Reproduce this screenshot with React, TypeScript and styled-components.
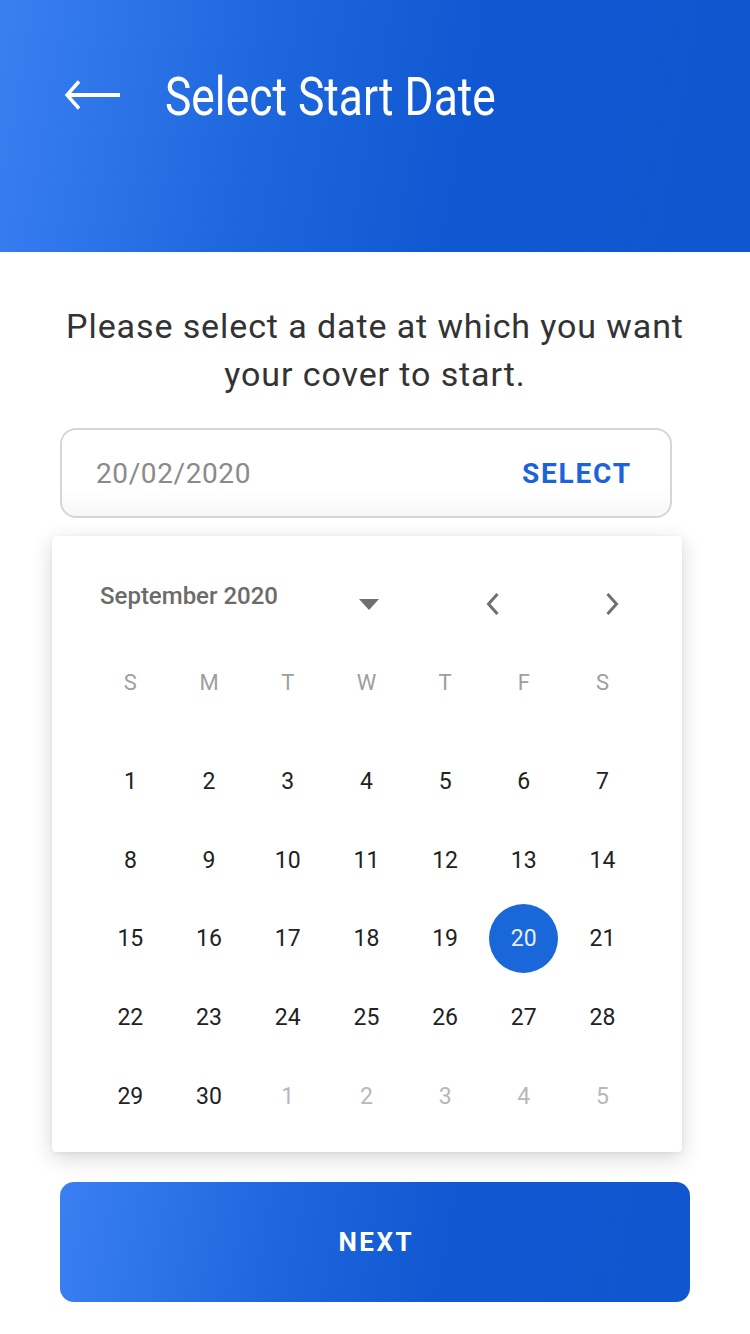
import React from 'react';
import styled, {createGlobalStyle} from 'styled-components';

type DayCell = {
	label: number,
	muted?: boolean,
	selected?: boolean
}

const GlobalStyle = createGlobalStyle`
	html, body {
		margin: 0;
		padding: 0;
		background: #ffffff;
	}
	body {
		font-family: Roboto, "Noto Sans", "Liberation Sans", sans-serif;
		-webkit-font-smoothing: antialiased;
	}
	* {
		box-sizing: border-box;
	}
`

const Page = styled.div`
	width: 750px;
	min-height: 1334px;
	display: flex;
	flex-direction: column;
	background: #ffffff;
`

const Header = styled.header`
	height: 252px;
	padding: 60px 0 0 64px;
	background: linear-gradient(100deg, #3a80f3 0%, #1e66dc 35%, #1058d1 62%, #0f56cf 100%);
`

const HeaderRow = styled.div`
	height: 72px;
	display: flex;
	align-items: center;
	gap: 45px;
`

const BackButton = styled.button`
	width: 56px;
	height: 34px;
	padding: 0;
	border: none;
	background: transparent;
	display: flex;
	align-items: center;
	cursor: pointer;
`

const Title = styled.h1`
	margin: 2px 0 0;
	font-size: 53px;
	line-height: 72px;
	font-weight: 400;
	color: #ffffff;
	white-space: nowrap;
	transform: scaleX(0.837);
	transform-origin: left center;
`

const Content = styled.main`
	display: flex;
	flex-direction: column;
	align-items: stretch;
	padding: 50px 60px 0;
`

const Intro = styled.p`
	margin: 0;
	font-size: 34px;
	line-height: 48px;
	color: #333333;
	text-align: center;
	letter-spacing: 0.9px;
	white-space: nowrap;
`

const DateField = styled.div`
	margin-top: 30px;
	width: 612px;
	height: 90px;
	padding: 0 38px 0 34px;
	display: flex;
	align-items: center;
	justify-content: space-between;
	border: 2px solid #d6d6d6;
	border-radius: 16px;
	background: linear-gradient(180deg, #ffffff 70%, #f7f7f7 100%);
`

const DateValue = styled.span`
	font-size: 28px;
	letter-spacing: 0.6px;
	color: #8a8a8a;
`

const SelectLink = styled.span`
	font-size: 28px;
	font-weight: 700;
	letter-spacing: 1.8px;
	color: #1a63d9;
`

const Calendar = styled.section`
	margin: 18px 0 0 -8px;
	width: 630px;
	height: 616px;
	padding: 0 40px 0 39px;
	background: #ffffff;
	border-radius: 4px;
	box-shadow: 0 6px 22px rgba(0, 0, 0, 0.16), 0 1px 4px rgba(0, 0, 0, 0.06);
`

const MonthBar = styled.div`
	height: 128px;
	padding: 40px 0 0 9px;
	display: flex;
	align-items: flex-start;
`

const MonthLabel = styled.span`
	width: 242px;
	font-size: 24px;
	font-weight: 500;
	color: #6b6b6b;
	line-height: 40px;
`

const IconSlot = styled.span<{gapBefore?: number}>`
	width: 62px;
	height: 56px;
	margin-left: ${props => props.gapBefore ?? 0}px;
	display: flex;
	align-items: center;
	justify-content: center;
`

const Grid = styled.div`
	display: grid;
	grid-template-columns: repeat(7, 78.7px);
`

const WeekDay = styled.div`
	height: 36px;
	display: flex;
	align-items: center;
	justify-content: center;
	font-size: 22px;
	color: #9e9e9e;
	margin-bottom: 42px;
`

const Day = styled.div<{muted?: boolean, selected?: boolean}>`
	height: 78.75px;
	display: flex;
	align-items: center;
	justify-content: center;

	span {
		width: 69px;
		height: 69px;
		border-radius: 50%;
		display: flex;
		align-items: center;
		justify-content: center;
		font-size: 23px;
		color: ${props => props.selected ? '#e6edfb' : props.muted ? '#b8b8b8' : '#222222'};
		background: ${props => props.selected ? '#1967d8' : 'transparent'};
	}
`

const NextButton = styled.button`
	margin-top: 30px;
	width: 630px;
	height: 120px;
	padding: 0 0 0 2.5px;
	border: none;
	border-radius: 14px;
	background: linear-gradient(100deg, #3a80f3 0%, #1e66dc 35%, #1058d1 62%, #0f56cf 100%);
	color: #ffffff;
	font-family: Roboto, "Liberation Sans", sans-serif;
	font-size: 26px;
	font-weight: 700;
	letter-spacing: 2.5px;
	cursor: pointer;
`

const weekDays = ['S', 'M', 'T', 'W', 'T', 'F', 'S']

const buildDays = (): DayCell[] => {
	const days: DayCell[] = []
	for (let i = 1; i <= 30; i++) {
		days.push({label: i, selected: i === 20})
	}
	for (let i = 1; i <= 5; i++) {
		days.push({label: i, muted: true})
	}
	return days
}

const ArrowLeft = () => (
	<svg width="56" height="34" viewBox="0 0 56 34" fill="none">
		<path d="M56 16H3" stroke="#ffffff" strokeWidth="4" />
		<path d="M15 2.5L3 16l12 13.5" stroke="#ffffff" strokeWidth="3.4" />
	</svg>
)

const Caret = () => (
	<svg width="20" height="11" viewBox="0 0 20 11">
		<path d="M0 0h20L10 11z" fill="#6f6f6f" />
	</svg>
)

const Chevron = ({dir}: {dir: 'left' | 'right'}) => (
	<svg width="14" height="24" viewBox="0 0 14 24" fill="none">
		<path
			d={dir === 'left' ? 'M11.5 2L2.5 12l9 10' : 'M2.5 2l9 10-9 10'}
			stroke="#6f6f6f"
			strokeWidth="3"
		/>
	</svg>
)

const App = () => {
	const days = buildDays()

	return (
		<Page>
			<GlobalStyle />
			<Header>
				<HeaderRow>
					<BackButton aria-label="Back">
						<ArrowLeft />
					</BackButton>
					<Title>Select Start Date</Title>
				</HeaderRow>
			</Header>

			<Content>
				<Intro>
					Please select a date at which you want
					<br />
					your cover to start.
				</Intro>

				<DateField>
					<DateValue>20/02/2020</DateValue>
					<SelectLink>SELECT</SelectLink>
				</DateField>

				<Calendar>
					<MonthBar>
						<MonthLabel>September 2020</MonthLabel>
						<IconSlot>
							<Caret />
						</IconSlot>
						<IconSlot gapBefore={63}>
							<Chevron dir="left" />
						</IconSlot>
						<IconSlot gapBefore={58}>
							<Chevron dir="right" />
						</IconSlot>
					</MonthBar>

					<Grid>
						{weekDays.map((d, i) => <WeekDay key={i}>{d}</WeekDay>)}
						{days.map((d, i) => (
							<Day key={i} muted={d.muted} selected={d.selected}>
								<span>{d.label}</span>
							</Day>
						))}
					</Grid>
				</Calendar>

				<NextButton>NEXT</NextButton>
			</Content>
		</Page>
	);
};

export default App;
